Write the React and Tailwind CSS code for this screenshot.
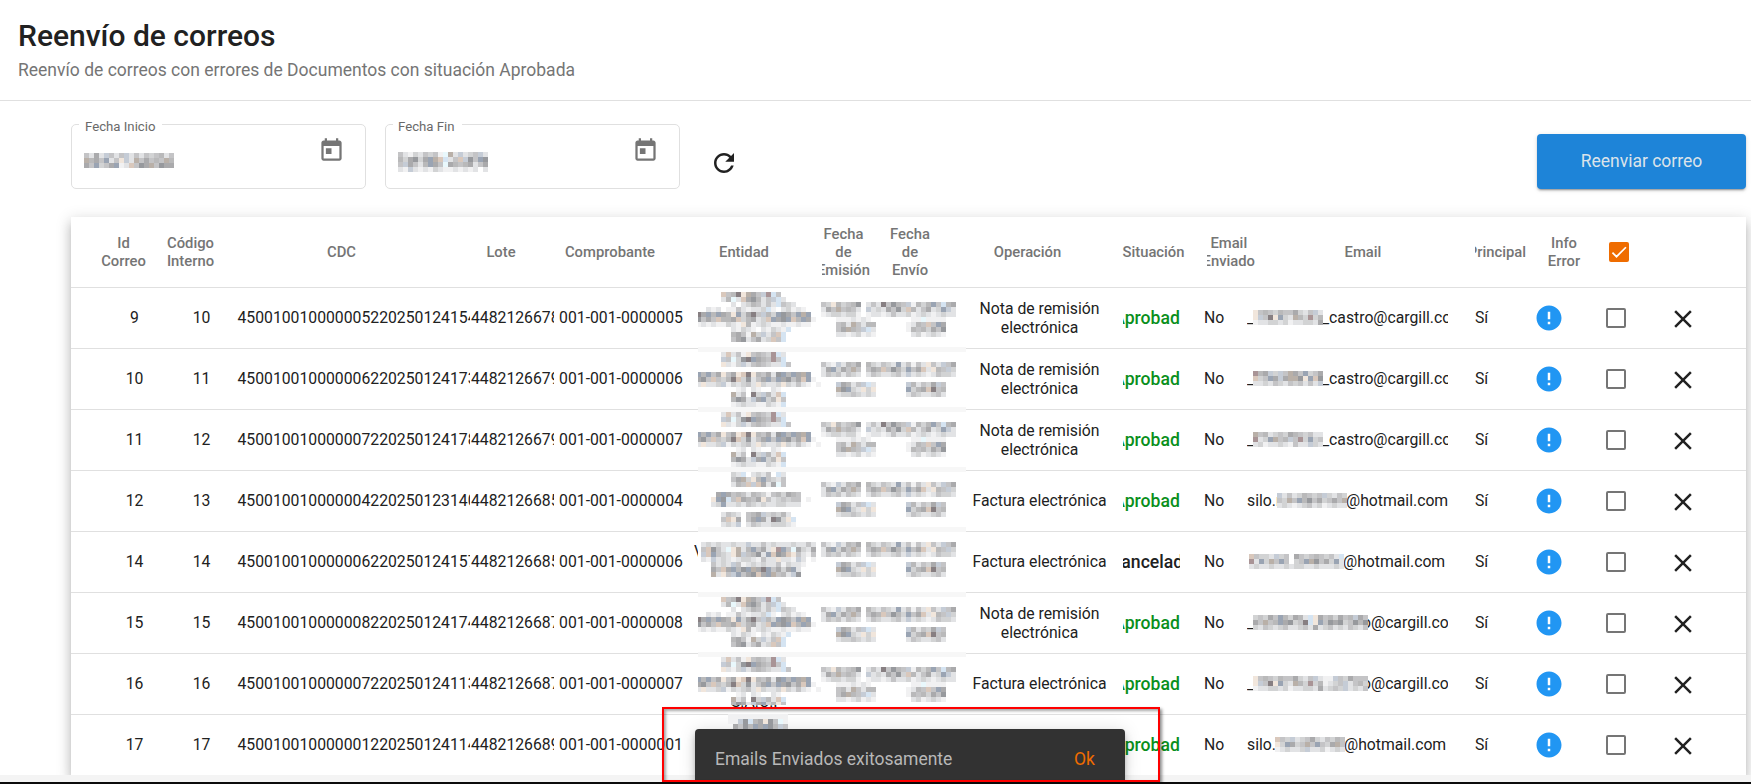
import React from 'react';

// Colour of every letter used in the censored patches
const TONES = {
    a: '#f1f1f2', b: '#e2e3e5', c: '#d2d3d4', d: '#c4c4c6', e: '#b9b9ba', f: '#aaaaac', g: '#97999d', h: '#877f82',
    i: '#d5e4f2', j: '#f1e6dc', k: '#d9c8bc', l: '#9aa4b3', m: '#a99496', n: '#e9f8fc', o: '#c5ccd6', p: '#b9b0a8', s: '#f7f7f7',
};

const ENTITY_A = [
    '.....kdehjpfdomid',
    '.....benbkfgebdoib',
    '.......b.bcedbdbidcb',
    '..bab.aadbabbcia.bcaba',
    'hflelfejlcfhdoeclgfdlpl',
    'gdfdkeefkcefbcklfglkelfa',
    'ababaacbajeabcbaabaabaa',
    '.......bacba.bacbai',
    '.......efdapcobdki',
    '.......dfgbdfbckdi',
];
const ENTITY_B = [
    '.....bkbdajdedcmib',
    '.....odncghlfedmdi',
    '.....jbacobdedcbbid',
    '',
    'leldfjdfjkhjedfbglelfpl',
    'fgdkdcehkcgbdfldlfgdfkla',
    'bjbbcoacbcdbjcbbcjcbdba.a',
    '........ab.ba..ba',
    '.......pbd.hcoebki',
    '.......egfboflcejd',
    '.......abcbbaacbai',
];
const ENTITY_C = [
    '.......cbi.bcbd.ib',
    '.......dfpcjeldcbd',
    '.......bedkokfbfnd',
    '',
    '....flfdedbedcadecfed',
    '...jlgidkfedfjdbcdcdd.a',
    '...bclbbcbdcbcbbccbbb',
    '',
    '.....bdcb.defocdceb',
    '.....dkjf.dflfbhgcji',
    '.....bcbo.bdcbbcccba',
];
const ENTITY_D = [
    '',
    '',
    '.bcbcbbcbbobbdbcbbbcbbdb',
    '.dkgdbnjpbeldfbjmldnfcbf',
    '.okldcbjpodegblkgfkjdbad',
    '.baobcbabccbadbbjbbaob.a',
    '...dbcbodabcbcbbdacbba',
    '...fdkfleglpfhldfcflb',
    '...pbjdoldfgkflpdebog',
];

const DATES_A = [
    '', '',
    'dcjecdeg.bdbhdgedoaeceldief',
    'bfdpdedb.obcbfdgckebdfbclob',
    'abccbcca.abbabdbbcabcbabcbb',
    '...aaababa........aanaaaa',
    '...debpdbee......abedkdlf',
    '...dfpedoib......aedecfdg',
    '...bbabcaba.......bcabcba',
];
const DATES_B = [
    '', '',
    'dbaobedf.ecbdcblbdadbjdbodf',
    'bflcfdpd.dfekdgecldfkbjedoc',
    'bdcdbdcb.bdcbbcdbobcbabdccb',
    '',
    '...ofebdoib......oebdcfod',
    '...pglcbjcj......lcefkhde',
    '...bccdcbcb......bdcbbcdb',
];

const rows = [
    { id: 9, codigo: 10, cdc: '450010010000005220250124154', lote: '44821266780', comp: '001-001-0000005', op: 'Nota de remisión electrónica', estado: 'Aprobado', pre: '_', preW: 'w-[6px]', mail: '_castro@cargill.com', mask: ['jdedceddfcbdob', 'jodhjlcbpecmce', 'abbccbcabbccbf'], patch: ENTITY_A, dates: DATES_A, top: 'top-[4px]', h: 60 },
    { id: 10, codigo: 11, cdc: '450010010000006220250124173', lote: '44821266790', comp: '001-001-0000006', op: 'Nota de remisión electrónica', estado: 'Aprobado', pre: '_', preW: 'w-[6px]', mail: '_castro@cargill.com', mask: ['mefocodpfdlcdf', 'kcdlfofppgjlkg', 'bbcbdcbdcdbdbo'], patch: ENTITY_B, dates: DATES_B, top: 'top-[3px]', h: 60 },
    { id: 11, codigo: 12, cdc: '450010010000007220250124178', lote: '44821266790', comp: '001-001-0000007', op: 'Nota de remisión electrónica', estado: 'Aprobado', pre: '_', preW: 'w-[6px]', mail: '_castro@cargill.com', mask: ['pdebcdcfedcdbb', 'mbclpdeodmclcd', 'bcabbcbadbbocb'], patch: ENTITY_B, dates: DATES_A, top: 'top-[2px]', h: 60 },
    { id: 12, codigo: 13, cdc: '450010010000004220250123140', lote: '44821266850', comp: '001-001-0000004', op: 'Factura electrónica', estado: 'Aprobado', pre: 'silo.r', preW: 'w-[30px]', mail: '@hotmail.com', mask: ['obdbcedcdocbdc', 'dcpdlegdfcdfdp', 'bcbabcdbcabcbb'], patch: ENTITY_C, dates: DATES_B, top: 'top-[1px]', h: 60 },
    { id: 14, codigo: 14, cdc: '450010010000006220250124157', lote: '44821266850', comp: '001-001-0000006', op: 'Factura electrónica', estado: 'Cancelado', pre: '', preW: 'w-[2px]', mail: '@hotmail.com', mask: ['kdccbocd.fdcdedcdbi', 'mblcpdld.cdlpgdfclb', 'bcbbcbbcbccbbcbbbcb'], patch: ENTITY_D, dates: DATES_B, top: 'top-0', h: 65, hint: 'V' },
    { id: 15, codigo: 15, cdc: '450010010000008220250124174', lote: '44821266870', comp: '001-001-0000008', op: 'Nota de remisión electrónica', estado: 'Aprobado', pre: '_', preW: 'w-[6px]', mail: 'o@cargill.com', hideFirst: true, mask: ['cdcfdlecfebijfdecfdeofd', 'fdpdelfgcdhijldgfgcdgeg', 'cbdcbcdbbcdbfbcdbcbdcbd'], patch: ENTITY_A, dates: DATES_B, top: 'top-[4px]', h: 60 },
    { id: 16, codigo: 16, cdc: '450010010000007220250124113', lote: '44821266870', comp: '001-001-0000007', op: 'Factura electrónica', estado: 'Aprobado', pre: '_', preW: 'w-[6px]', mail: 'o@cargill.com', hideFirst: true, mask: ['jdedceddfcbdobaaodcfddd', 'jodhjlcbpecmceabcdobdec', 'abbccbcabbccbfbcdcobcbd'], patch: ENTITY_B, dates: DATES_A, top: 'top-[3px]', h: 48, hint: 'S.A.C.I' },
    { id: 17, codigo: 17, cdc: '450010010000001220250124114', lote: '44821266890', comp: '001-001-0000001', op: '', estado: 'Aprobado', pre: 'silo.', preW: 'w-[28px]', mail: '@hotmail.com', mask: ['kdcobcdfcbdced', 'jclfcdpdldcfpd', 'abcbbcobbcabcb'], last: true },
];

const Mosaic = ({ cells, start = 0, className }) => {
    const cols = Math.max(...cells.map((line) => line.length));
    return (
        <svg className={className} width={cols * 5} height={cells.length * 5} shapeRendering="crispEdges">
            {cells.map((line, y) =>
                line.split('').map((c, x) => TONES[c] && (
                    <rect key={`${x}-${y}`} x={x * 5 - start} y={y * 5} width="5" height="5" fill={TONES[c]} />
                ))
            )}
        </svg>
    );
};

const CensoredBlock = ({ row }) => (
    <div className={`absolute left-[627px] w-[268px] overflow-hidden bg-white ${row.top}`} style={{ height: row.h }}>
        <Mosaic cells={row.patch} start={2} className="absolute left-0 top-0" />
        <Mosaic cells={row.dates} className="absolute left-[123px] top-0" />
        {row.h >= 60 && <div className="absolute bottom-0 h-[5px] w-full bg-[#f7f7f7]" />}
    </div>
);

const DateField = ({ label, labelClass, mask, maskClass }) => (
    <div className="relative h-[65px] w-[295px] rounded-[5px] border border-[#e0e0e0] bg-white">
        <span className={`absolute -top-[6px] h-[16px] bg-white text-[13.2px] leading-[16px] text-[#696969] ${labelClass}`}>{label}</span>
        <Mosaic cells={mask} className={`absolute left-[12px] ${maskClass}`} />
        <svg viewBox="0 0 24 24" className="absolute left-[246px] top-[11.5px] size-[27px] fill-[#757575]">
            <path d="M19 3h-1V1h-2v2H8V1H6v2H5c-1.11 0-1.99.9-1.99 2L3 19c0 1.1.89 2 2 2h14c1.1 0 2-.9 2-2V5c0-1.1-.9-2-2-2zm0 16H5V8h14v11zM7 10h5v5H7z" />
        </svg>
    </div>
);

const Th = ({ className = '', end, children }) => (
    <div className={`flex shrink-0 items-center overflow-hidden whitespace-pre text-center ${end ? 'justify-end' : 'justify-center'} ${className}`}>
        {children}
    </div>
);

// Text cells sit one pixel above the middle of the row
const Td = ({ className = '', children }) => (
    <div className={`flex h-full shrink-0 items-center overflow-hidden whitespace-nowrap ${className}`}>{children}</div>
);

const App = () => {
    return (
        <div className="relative flex h-[784px] w-[1751px] flex-col overflow-hidden bg-white font-['Roboto',sans-serif] text-[#212121]">
            {/* Title */}
            <header className="h-[101px] shrink-0 border-b border-[#e0e0e0] pl-[18px] pt-[18px]">
                <h1 className="text-[30px] font-medium leading-[36px]">Reenvío de correos</h1>
                <p className="mt-[5px] text-[17.5px] leading-[22px] text-[#757575]">Reenvío de correos con errores de Documentos con situación Aprobada</p>
            </header>

            {/* Filters */}
            <div className="flex h-[116px] shrink-0 items-start pl-[71px] pr-[5px] pt-[23px]">
                <DateField
                    label="Fecha Inicio"
                    labelClass="left-[7px] w-[83px] pl-[6px]"
                    mask={['dbfbodbdobdbdcdebd', 'pefdlbdjobpdfdedpe', 'fdlcdflabkdgfpdgff']}
                    maskClass="top-[28px]"
                />
                <div className="w-[19px]" />
                <DateField
                    label="Fecha Fin"
                    labelClass="left-[7px] w-[69px] pl-[5px]"
                    mask={['dbacbdcdanpbobcdob', 'ecfgcflpkibdkogdlg', 'dofdbelfdnfedefbdf', 'baobabacbaababab.b']}
                    maskClass="top-[27px]"
                />
                <svg viewBox="0 0 24 24" className="ml-[29px] mt-[24px] size-[30px] fill-[#212121]">
                    <path d="M17.65 6.35C16.2 4.9 14.21 4 12 4c-4.42 0-7.99 3.58-7.99 8s3.57 8 7.99 8c3.73 0 6.84-2.55 7.73-6h-2.08c-.82 2.33-3.04 4-5.65 4-3.31 0-6-2.69-6-6s2.69-6 6-6c1.66 0 3.14.69 4.22 1.78L13 11h7V4l-2.35 2.35z" />
                </svg>
                <button className="ml-auto mt-[10px] h-[55px] w-[209px] rounded-[4px] bg-[#1e84d8] text-[17.5px] text-[#dbe3ea] shadow-[0_3px_1px_-2px_rgba(0,0,0,0.2),0_2px_2px_0_rgba(0,0,0,0.14),0_1px_5px_0_rgba(0,0,0,0.12)]">
                    Reenviar correo
                </button>
            </div>

            {/* Table */}
            <div className="ml-[71px] h-[558px] w-[1675px] shrink-0 bg-white shadow-[0_5px_5px_-3px_rgba(0,0,0,0.2),0_8px_10px_1px_rgba(0,0,0,0.14),0_3px_14px_2px_rgba(0,0,0,0.12)]">
                <div className="flex h-[71px] border-b border-[#e0e0e0] text-[14.8px] font-medium leading-[18px] text-[#757575]">
                    <Th className="ml-[19px] w-[67px]">{'Id\nCorreo'}</Th>
                    <Th className="w-[67px]">{'Código\nInterno'}</Th>
                    <Th className="w-[235px]">CDC</Th>
                    <Th className="w-[84px]">Lote</Th>
                    <Th className="w-[134px]">Comprobante</Th>
                    <Th className="w-[134px]">Entidad</Th>
                    <Th end className="ml-[11px] w-[48px]">{'Fecha\nde\nEmisión'}</Th>
                    <Th className="ml-[7px] w-[66px]">{'Fecha\nde\nEnvío'}</Th>
                    <Th className="ml-[12px] w-[145px]">Operación</Th>
                    <Th className="ml-[21px] w-[65px]">Situación</Th>
                    <Th end className="ml-[21px] w-[48px]">{'Email\nEnviado'}</Th>
                    <Th className="ml-[8px] w-[200px]">Email</Th>
                    <Th end className="ml-[12px] w-[51px]">Principal</Th>
                    <Th className="ml-[16px] w-[44px]">{'Info\nError'}</Th>
                    <Th className="ml-[23px] w-[20px]">
                        <svg viewBox="0 0 24 24" className="size-[20px] rounded-[2px] bg-[#ef6c00]">
                            <path d="M4.1,12.7 9,17.6 20.3,6.3" fill="none" stroke="#fff" strokeWidth="2.1" />
                        </svg>
                    </Th>
                </div>

                {rows.map((row) => (
                    <div key={row.id} className={`relative flex items-center text-[15.75px] leading-[19px] ${row.last ? 'h-[60px]' : 'h-[61px] border-b border-[#e0e0e0]'}`}>
                        <Td className="ml-[30px] w-[67px] justify-center pb-[2px]">{row.id}</Td>
                        <Td className="w-[67px] justify-center pb-[2px]">{row.codigo}</Td>
                        <Td className="ml-[2px] w-[233px] pb-[2px] pl-[0.5px]">{row.cdc}</Td>
                        <Td className="w-[84px] pb-[2px] pl-[1px]">{row.lote}</Td>
                        <Td className="ml-[4px] w-[126px] justify-center pb-[2px]">{row.comp}</Td>
                        <Td className="ml-[10px] w-[123px]">
                            {row.hint === 'V' && <span className="mb-[22px]">V</span>}
                            {row.hint === 'S.A.C.I' && <span className="ml-[37px] mt-[35px]">S.A.C.I</span>}
                        </Td>
                        <Td className="ml-[140px] w-[165px] justify-center">
                            <span className="w-[140px] whitespace-normal text-center">
                                {row.op.startsWith('Nota') ? row.op : <span className="relative -top-px">{row.op}</span>}
                            </span>
                        </Td>
                        <Td className={`ml-[1px] w-[57px] justify-center text-[17.6px] font-medium ${row.estado === 'Aprobado' ? 'text-[#0a8f1c]' : ''}`}>{row.estado}</Td>
                        <Td className="ml-[24px] w-[28px] pb-[2px]">No</Td>
                        <Td className="ml-[15px] w-[201px] pb-[1px]">
                            <span className={`mb-[1px] shrink-0 overflow-hidden ${row.preW}`}>{row.pre}</span>
                            <Mosaic cells={row.mask} className={`relative shrink-0 ${row.hideFirst ? '-mr-[6px]' : '-mr-px'}`} />
                            <span className="mb-[1px]">{row.mail}</span>
                        </Td>
                        <Td className="ml-[27px] w-[40px] pb-[2px]">Sí</Td>
                        <Td className="ml-[19px] w-[30px] justify-center">
                            <svg viewBox="0 0 24 24" className="size-[30px] fill-[#2196f3]">
                                <path d="M12 2C6.48 2 2 6.48 2 12s4.48 10 10 10 10-4.48 10-10S17.52 2 12 2zm1 15h-2v-2h2v2zm0-4h-2V7h2v6z" />
                            </svg>
                        </Td>
                        <Td className="ml-[42px] w-[20px]">
                            <span className="size-[20px] rounded-[2px] border-2 border-[#757575]" />
                        </Td>
                        <Td className="ml-[42px] w-[30px]">
                            <svg viewBox="0 0 24 24" className="mt-[2px] size-[30px] fill-[#212121]">
                                <path d="M19 6.41L17.59 5 12 10.59 6.41 5 5 6.41 10.59 12 5 17.59 6.41 19 12 13.41 17.59 19 19 17.59 13.41 12z" />
                            </svg>
                        </Td>
                        {row.patch && <CensoredBlock row={row} />}
                    </div>
                ))}
            </div>

            {/* Bottom edge */}
            <div className="relative h-[7px] shrink-0 bg-[#f4f4f4]" />
            <div className="relative h-[2px] shrink-0 bg-[#0b0b0b]" />

            {/* Snackbar */}
            <div className="absolute left-[695px] top-[729px] flex h-[53px] w-[430px] items-center justify-between rounded-t-[4px] bg-[#323232] pl-[20px] pr-[30px] pt-[7px] text-[17.5px] text-[#b8b8b8] shadow-[0_3px_5px_-1px_rgba(0,0,0,0.2),0_6px_10px_0_rgba(0,0,0,0.14),0_1px_18px_0_rgba(0,0,0,0.12)]">
                <span>Emails Enviados exitosamente</span>
                <span className="text-[#ef6c00]">Ok</span>
            </div>
            <Mosaic cells={['aaaaaaaaaaaa', 'aaogiefjgdna', '.fdgelflgeod']} className="absolute left-[728px] top-[714px]" />

            {/* Highlight frame */}
            <div className="absolute left-[662px] top-[707px] h-[75px] w-[498px] border-2 border-[#ff0000] shadow-[2px_2px_3px_rgba(0,0,0,0.45),inset_2px_2px_3px_rgba(0,0,0,0.35)]" />
            <div className="absolute bottom-0 h-[2px] w-full bg-[#0b0b0b]" />
        </div>
    );
};

export default App;
